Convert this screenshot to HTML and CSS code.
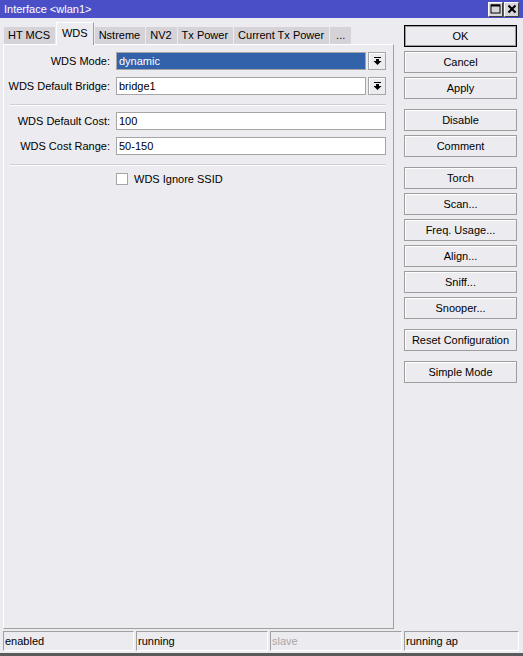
FILE: index.html
```html
<!DOCTYPE html>
<html lang="en">
<head>
    <meta charset="UTF-8">
    <title>Interface &lt;wlan1&gt;</title>
    <link rel="stylesheet" href="styles.css">
</head>
<body>
<div class="window">
    <div class="titlebar">
        <span class="title">Interface &lt;wlan1&gt;</span>
        <div class="title-buttons">
            <span class="tbtn">
                <svg width="11" height="10" viewBox="0 0 11 10"><rect x="1" y="1" width="9" height="8" fill="none" stroke="#000" stroke-width="1"/><rect x="1" y="0.5" width="9" height="2" fill="#000"/></svg>
            </span>
            <span class="tbtn">
                <svg width="10" height="10" viewBox="0 0 10 10"><path d="M1.5 1.5 L8.5 8.5 M8.5 1.5 L1.5 8.5" stroke="#000" stroke-width="2"/></svg>
            </span>
        </div>
    </div>

    <div class="main">
        <div class="left">
            <div class="tabs">
                <div class="tab">HT MCS</div>
                <div class="tab active">WDS</div>
                <div class="tab">Nstreme</div>
                <div class="tab">NV2</div>
                <div class="tab">Tx Power</div>
                <div class="tab">Current Tx Power</div>
                <div class="tab more">...</div>
            </div>
            <div class="panel">
                <div class="row">
                    <label class="label">WDS Mode:</label>
                    <div class="field selected">dynamic</div>
                    <div class="drop">
                        <svg width="9" height="9" viewBox="0 0 9 9"><rect x="1" y="0" width="7" height="1"/><rect x="3" y="2" width="3" height="2"/><polygon points="0.5,4 8.5,4 4.5,8"/></svg>
                    </div>
                </div>
                <div class="row">
                    <label class="label">WDS Default Bridge:</label>
                    <div class="field">bridge1</div>
                    <div class="drop">
                        <svg width="9" height="9" viewBox="0 0 9 9"><rect x="1" y="0" width="7" height="1"/><rect x="3" y="2" width="3" height="2"/><polygon points="0.5,4 8.5,4 4.5,8"/></svg>
                    </div>
                </div>
                <div class="separator"></div>
                <div class="row">
                    <label class="label">WDS Default Cost:</label>
                    <div class="field">100</div>
                </div>
                <div class="row">
                    <label class="label">WDS Cost Range:</label>
                    <div class="field">50-150</div>
                </div>
                <div class="separator"></div>
                <div class="check-row">
                    <span class="checkbox"></span>
                    <span class="check-label">WDS Ignore SSID</span>
                </div>
            </div>
        </div>

        <div class="buttons">
            <div class="group">
                <div class="btn default">OK</div>
                <div class="btn">Cancel</div>
                <div class="btn">Apply</div>
            </div>
            <div class="group">
                <div class="btn">Disable</div>
                <div class="btn">Comment</div>
            </div>
            <div class="group">
                <div class="btn">Torch</div>
                <div class="btn">Scan...</div>
                <div class="btn">Freq. Usage...</div>
                <div class="btn">Align...</div>
                <div class="btn">Sniff...</div>
                <div class="btn">Snooper...</div>
            </div>
            <div class="group">
                <div class="btn">Reset Configuration</div>
            </div>
            <div class="group">
                <div class="btn">Simple Mode</div>
            </div>
        </div>
    </div>

    <div class="statusbar">
        <div class="cell">enabled</div>
        <div class="cell">running</div>
        <div class="cell disabled">slave</div>
        <div class="cell">running ap</div>
    </div>
</div>
</body>
</html>
```

FILE: styles.css
```css
html, body {
    margin: 0;
    padding: 0;
}
body {
    font-family: "Liberation Sans", Arial, sans-serif;
    font-size: 11px;
    color: #000;
    background: #ecebef;
}
.window {
    width: 523px;
    height: 656px;
    display: flex;
    flex-direction: column;
    background: #ecebef;
    box-sizing: border-box;
    border-bottom: 3px solid #5a5a5a;
}

/* title bar */
.titlebar {
    height: 18px;
    background: #4b4fc7;
    color: #fff;
    display: flex;
    align-items: center;
    justify-content: space-between;
    padding: 0 4px 0 4px;
    font-size: 11px;
}
.title-buttons {
    display: flex;
    gap: 1px;
}
.tbtn {
    width: 15px;
    height: 15px;
    box-sizing: border-box;
    background: #d8d6dc;
    border: 1px solid #fff;
    border-right-color: #404040;
    border-bottom-color: #404040;
    display: flex;
    align-items: center;
    justify-content: center;
}

/* main area */
.main {
    flex: 1;
    display: flex;
    min-height: 0;
}
.left {
    width: 394px;
    box-sizing: border-box;
    padding: 4px 0 0 3px;
    display: flex;
    flex-direction: column;
}
.tabs {
    display: flex;
    align-items: flex-end;
    padding-left: 1px;
    height: 22px;
}
.tab {
    height: 17px;
    line-height: 17px;
    padding: 0 5px 0 4px;
    margin-right: 1px;
    background: #d5d3d8;
    box-sizing: border-box;
}
.tab.more {
    padding: 0 6px;
}
.tab.active {
    height: 23px;
    line-height: 21px;
    padding: 0 5px;
    background: #ecebef;
    border-top: 1px solid #fff;
    border-left: 1px solid #fff;
    border-right: 1px solid #a0a0a0;
    margin-bottom: -1px;
    position: relative;
    z-index: 1;
}
.panel {
    flex: 1;
    display: flex;
    flex-direction: column;
    border-top: 1px solid #fff;
    border-left: 1px solid #fff;
    border-right: 1px solid #a0a0a0;
    border-bottom: 1px solid #a0a0a0;
    padding: 7px 7px 0 0;
}
.row {
    display: flex;
    align-items: center;
    height: 18px;
    margin-bottom: 7px;
}
.label {
    width: 106px;
    text-align: right;
    margin-right: 6px;
    white-space: nowrap;
}
.field {
    flex: 1;
    height: 18px;
    box-sizing: border-box;
    border: 1px solid #a5a5a5;
    background: #fff;
    line-height: 16px;
    padding-left: 2px;
}
.field.selected {
    background: #3162aa;
    color: #fff;
}
.drop {
    width: 18px;
    height: 18px;
    box-sizing: border-box;
    margin-left: 2px;
    border: 1px solid #a5a5a5;
    background: #ecebef;
    box-shadow: inset 1px 1px 0 #fff;
    display: flex;
    align-items: center;
    justify-content: center;
}
.separator {
    height: 1px;
    background: #cfcdd2;
    border-bottom: 1px solid #fff;
    margin: 2px 0 6px 6px;
}
.check-row {
    display: flex;
    align-items: center;
    height: 13px;
    padding-left: 112px;
}
.checkbox {
    width: 12px;
    height: 12px;
    box-sizing: border-box;
    border: 1px solid #a5a5a5;
    background: #fff;
    margin-right: 6px;
}

/* buttons column */
.buttons {
    padding: 7px 0 0 10px;
    display: flex;
    flex-direction: column;
    gap: 10px;
}
.group {
    display: flex;
    flex-direction: column;
    gap: 4px;
}
.btn {
    width: 113px;
    height: 22px;
    box-sizing: border-box;
    border: 1px solid #9d9d9d;
    box-shadow: inset 1px 1px 0 #fff;
    background: #ecebef;
    text-align: center;
    line-height: 20px;
    white-space: nowrap;
}
.btn.default {
    border-color: #000;
    box-shadow: inset 0 0 0 1px #9d9d9d;
}

/* status bar */
.statusbar {
    display: grid;
    grid-template-columns: 131px 132px 132px 115px;
    gap: 2px;
    padding: 2px 0 0 3px;
    height: 24px;
    box-sizing: border-box;
}
.cell {
    height: 20px;
    box-sizing: border-box;
    border: 1px solid #fff;
    border-top-color: #a0a0a0;
    border-left-color: #a0a0a0;
    padding-left: 1px;
    line-height: 18px;
}
.cell.disabled {
    color: #a8a8a8;
}
```
